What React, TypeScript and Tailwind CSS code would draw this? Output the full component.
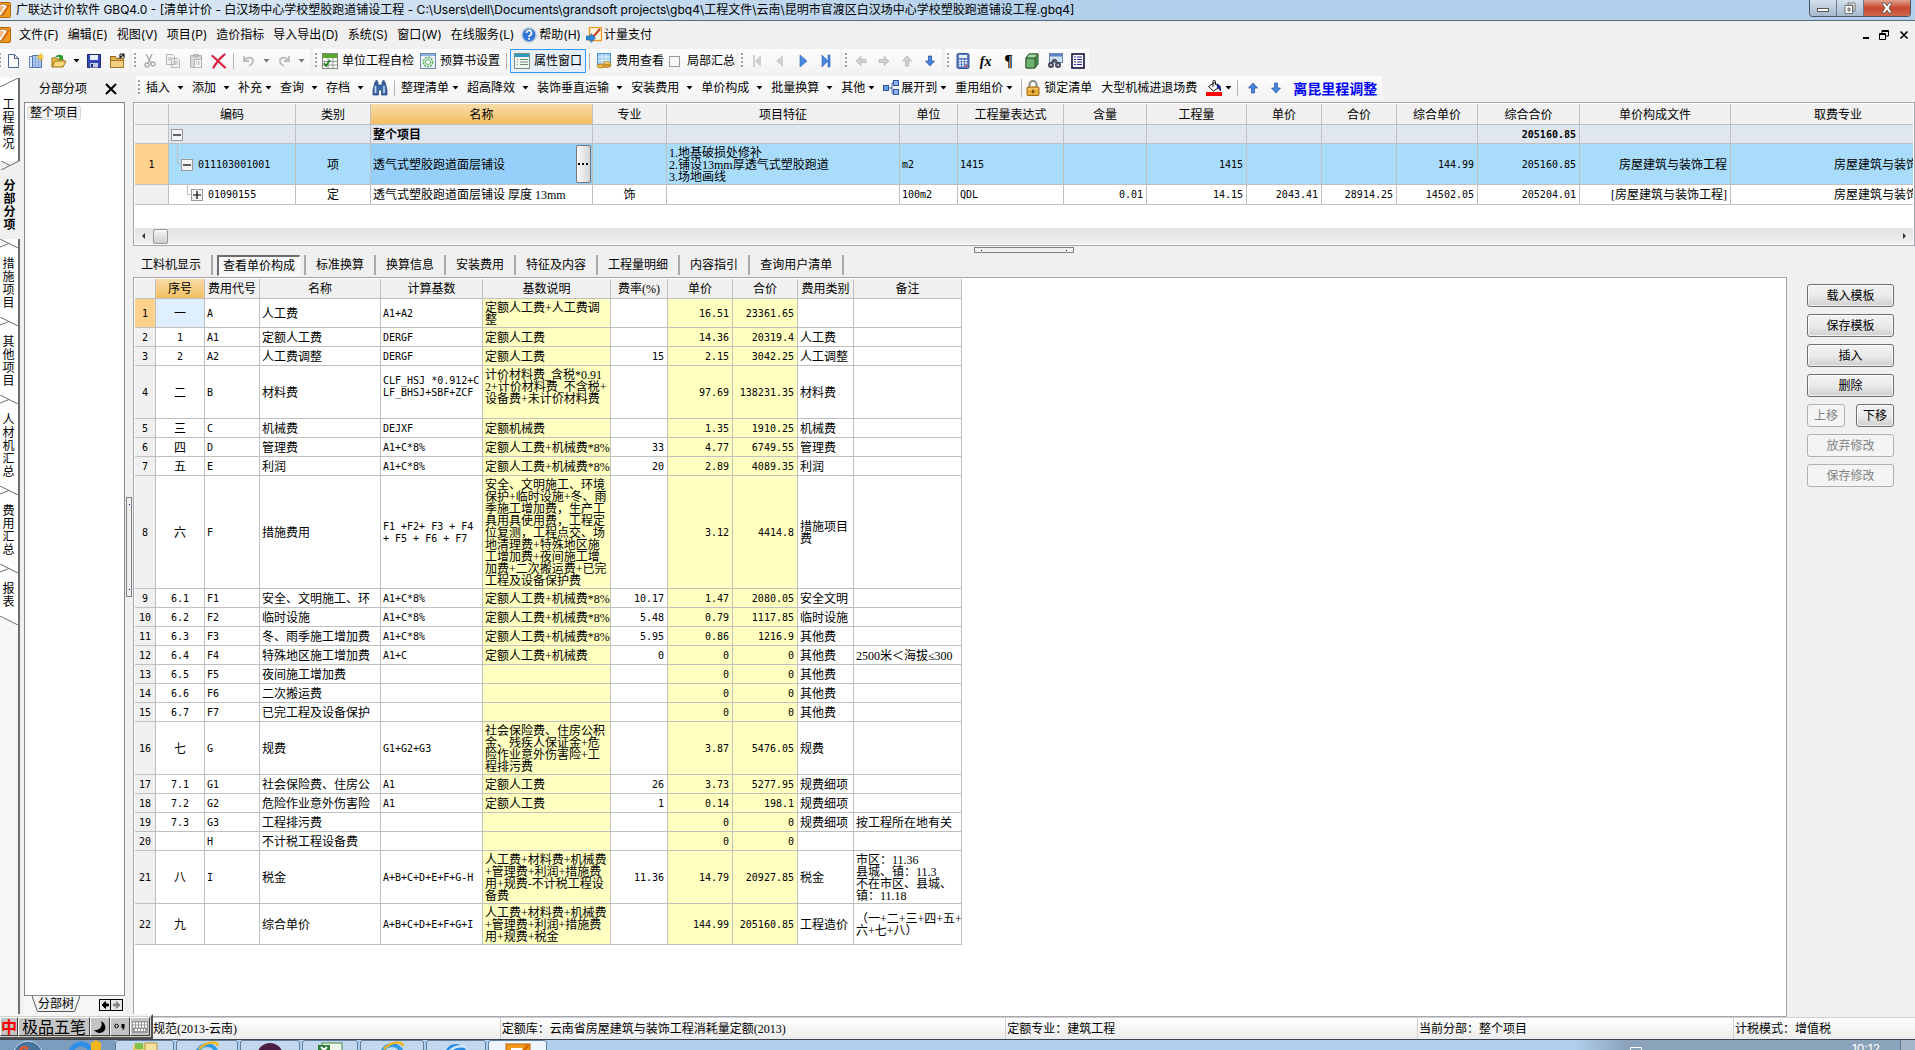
import React from 'react';
import clsx from 'clsx';

type Align = 'left' | 'center' | 'right';

/* ---------- icons ---------- */

const paths: Record<string, React.ReactNode> = {
  logo: (
    <>
      <rect x="0.5" y="0.5" width="15" height="15" rx="1" fill="#f39a1d" stroke="#b5650a" />
      <path d="M2 4l6-2 5 2-4 9-6 1z" fill="#fff" stroke="#8a5a20" strokeWidth="0.7" />
      <path d="M4 5h5M4 7h4M4 9h3" stroke="#e07a10" />
      <path d="M14 3L7 13" stroke="#d86a00" strokeWidth="2" />
    </>
  ),
  help: (
    <>
      <circle cx="8" cy="8" r="7" fill="#2f74d8" stroke="#b8c4d4" strokeWidth="1.5" />
      <path d="M5.5 6a2.5 2.5 0 1 1 3.6 2.2C8.2 8.7 8 9 8 10" fill="none" stroke="#fff" strokeWidth="1.7" />
      <rect x="7.2" y="11" width="1.7" height="1.7" fill="#fff" />
    </>
  ),
  pay: (
    <>
      <rect x="3.5" y="0.5" width="12" height="13" fill="#fff7e0" stroke="#e89a20" strokeWidth="1.4" />
      <path d="M14 2L7 10l-2-2" fill="none" stroke="#c8401a" strokeWidth="2" />
      <path d="M0 9h5V6.5l4.5 4.5L5 15.5V13H0z" fill="#2b8bd8" stroke="#125a9a" strokeWidth="0.6" />
    </>
  ),
  page: <path d="M3.5 1.5h6l4 4v9h-10z M9.5 1.5v4h4" fill="#fff" stroke="#46648c" />,
  sheets: (
    <>
      <path d="M1.5 3.5h9v11h-9z" fill="#dce9fa" stroke="#5d82b5" />
      <path d="M4.5 2.5h9v12h-9z" fill="#b5d0f2" stroke="#4d77b0" />
      <path d="M7.5 3v11M10.5 3v11M5 6h8M5 9h8M5 12h8" stroke="#7ba0d0" strokeWidth="0.7" />
      <path d="M12.5 0v8M8.5 4h8M10 1.5l5 5M15 1.5l-5 5" stroke="#f4c53a" strokeWidth="1.1" />
    </>
  ),
  open: (
    <>
      <path d="M1 14V5h4l1 1h6v2" fill="#f0c24c" stroke="#9a6e12" />
      <path d="M1 14l3-6h11l-3 6z" fill="#fbdc7c" stroke="#9a6e12" />
      <path d="M4 5c1-4 6-4 7-2l1-1v5H7l2-1.6C8 3.5 6 3.5 4 5z" fill="#2e9a2e" />
    </>
  ),
  save: (
    <>
      <path d="M1.5 1.5h13v13h-13z" fill="#3449b4" stroke="#1d2a7a" />
      <rect x="4" y="2" width="8" height="5" fill="#e8ecfa" />
      <rect x="4" y="10" width="8" height="4.5" fill="#c8cde6" />
      <rect x="5" y="11" width="2" height="3" fill="#1d2a7a" />
    </>
  ),
  folder: (
    <>
      <path d="M1.5 14.5v-11h5l1 2h7v9z" fill="#e6b04a" stroke="#8e6420" />
      <path d="M1.5 7.5h13v7h-13z" fill="#f5d083" stroke="#a37728" />
      <path d="M11 5V1m0 0h4v4m0-4l-4 4" fill="none" stroke="#222" strokeWidth="1.2" />
    </>
  ),
  cut: (
    <g fill="none" stroke="#a8a8a8" strokeWidth="1.3">
      <path d="M4 1l5 9M10 1L6 10" />
      <circle cx="5" cy="12" r="2" />
      <circle cx="11" cy="11" r="2" />
    </g>
  ),
  copy: <path d="M1.5 1.5h6l2 2v8h-8zM6.5 5.5h6l2 2v7h-8zM8 9h5M8 11h5M3 5h3M3 7h3" fill="#f4f4f4" stroke="#b4b4b4" />,
  paste: (
    <>
      <path d="M2.5 2.5h11v12h-11z" fill="#d8d8d8" stroke="#b0b0b0" />
      <rect x="5" y="1" width="6" height="3" fill="#b8b8b8" />
      <path d="M6.5 6.5h7v8h-7zM8 9h4M8 11h4" fill="#f6f6f6" stroke="#b4b4b4" />
    </>
  ),
  del: <path d="M1.5 3C5 6 9 10 14 14.5M13.5 1.5C9 5 5 10 2.5 14.5" fill="none" stroke="#d81e3a" strokeWidth="2.2" strokeLinecap="round" />,
  undo: <path d="M3 3v5h5M3 8c3-5 9-4 9 0 0 3-2 4-4 5" fill="none" stroke="#bcbcbc" strokeWidth="1.8" />,
  redo: <path d="M13 3v5H8M13 8c-3-5-9-4-9 0 0 3 2 4 4 5" fill="none" stroke="#bcbcbc" strokeWidth="1.8" />,
  check: (
    <>
      <rect x="0.5" y="0.5" width="15" height="15" fill="#fff" stroke="#7d8a7d" />
      <rect x="1" y="1" width="14" height="4" fill="#5aa82a" />
      <path d="M1 8.5h14M1 12h14M6 5v10M11 5v10" stroke="#8a978a" />
      <path d="M2 10l2 3 4-6" fill="none" stroke="#1c7a1c" strokeWidth="1.6" />
    </>
  ),
  gear: (
    <>
      <rect x="0.5" y="0.5" width="15" height="15" fill="#eaf1f8" stroke="#6e8cab" />
      <rect x="1" y="1" width="14" height="2" fill="#8fb4da" />
      <circle cx="8" cy="9" r="4.6" fill="none" stroke="#62b562" strokeWidth="1.6" strokeDasharray="2 1" />
      <circle cx="8" cy="9" r="2.5" fill="#fff" stroke="#62b562" />
    </>
  ),
  props: (
    <>
      <rect x="0.5" y="0.5" width="15" height="15" fill="#f4f6f4" stroke="#78917f" />
      <rect x="1" y="1" width="14" height="3" fill="#2a9ac4" />
      <path d="M3 6.5h1M3 9h1M3 11.5h1M6 6.5h8M6 9h8M6 11.5h8" stroke="#6b8a75" />
    </>
  ),
  fee: (
    <>
      <rect x="1.5" y="0.5" width="13" height="11" fill="#9fd0f0" stroke="#4c96c8" />
      <path d="M2 4h12M2 7.5h12M6 1v10M10 1v10" stroke="#e6f4fc" />
      <ellipse cx="5" cy="13" rx="4" ry="2" fill="#e7b84c" stroke="#a8761a" strokeWidth="0.7" />
      <ellipse cx="11" cy="12" rx="4" ry="2.5" fill="#d99b30" stroke="#a8761a" strokeWidth="0.7" />
      <ellipse cx="11" cy="10" rx="3.5" ry="1.5" fill="#f5d47c" stroke="#a8761a" strokeWidth="0.7" />
    </>
  ),
  first: <path d="M4 2v12h2V8l6 6V2L6 8V2z" fill="#cfcfcf" />,
  prev: <path d="M11 2v12L4 8z" fill="#cfcfcf" />,
  next: <path d="M5 2v12l7-6z" fill="#4a86e0" stroke="#2c62ba" strokeWidth="0.6" />,
  last: <path d="M12 2v12h-2V8l-6 6V2l6 6V2z" fill="#4a86e0" stroke="#2c62ba" strokeWidth="0.6" />,
  aleft: <path d="M3 8l5-4.5v3h5v3H8v3z" fill="#d0d0d0" stroke="#b0b0b0" strokeWidth="0.7" />,
  aright: <path d="M13 8L8 3.5v3H3v3h5v3z" fill="#d0d0d0" stroke="#b0b0b0" strokeWidth="0.7" />,
  aupOff: <path d="M8 3l4.5 5h-3v5h-3V8h-3z" fill="#d0d0d0" stroke="#b0b0b0" strokeWidth="0.7" />,
  aup: <path d="M8 3l4.5 5h-3v5h-3V8h-3z" fill="#4a86e0" stroke="#1f4fa0" strokeWidth="0.7" />,
  adown: <path d="M8 13l4.5-5h-3V3h-3v5h-3z" fill="#4a86e0" stroke="#1f4fa0" strokeWidth="0.7" />,
  calc: (
    <>
      <rect x="2" y="0.5" width="12" height="15" rx="1.5" fill="#5c7fc4" stroke="#33508c" />
      <rect x="4" y="2" width="8" height="3" fill="#e4eef8" />
      <path d="M4 7.5h8M4 10h8M4 12.5h8" stroke="#fff" strokeWidth="1.5" strokeDasharray="2 1" />
      <rect x="10" y="12" width="2" height="2" fill="#e04a3a" />
    </>
  ),
  cube: (
    <>
      <path d="M2 5l3-4h9v10l-3 4H2z" fill="#4a8f4a" stroke="#2c5a2c" />
      <path d="M2 5h9v10H2z" fill="#6fb26f" stroke="#2c5a2c" />
      <path d="M2 5l3-4h9l-3 4z" fill="#a8d6a8" stroke="#2c5a2c" />
    </>
  ),
  find: (
    <>
      <rect x="2.5" y="0.5" width="13" height="9" fill="#cfe0f4" stroke="#6a87b2" />
      <rect x="3" y="1" width="12" height="2.5" fill="#5b85c8" />
      <circle cx="4" cy="12" r="3" fill="#445" />
      <circle cx="11" cy="12" r="3" fill="#445" />
      <path d="M4 9l2-3h3l2 3" fill="#556" />
      <circle cx="4" cy="12" r="1.3" fill="#aac" />
      <circle cx="11" cy="12" r="1.3" fill="#aac" />
    </>
  ),
  list: (
    <>
      <rect x="2" y="1" width="12" height="14" fill="#fff" stroke="#101040" strokeWidth="1.6" />
      <path d="M4 4h2M4 6.5h2M4 9h2M4 11.5h2M7 4h5M7 6.5h5M7 9h5M7 11.5h5" stroke="#23238c" />
    </>
  ),
  binoc: (
    <>
      <path d="M3 2h3v3h4V2h3l2 8v5H9.5v-5h-3v5H1v-5z" fill="#3c68a8" stroke="#1d3c70" strokeWidth="0.7" />
      <path d="M3.5 6v7M12 6v7" stroke="#c4d8f0" strokeWidth="1.6" />
      <path d="M3.5 1h2M10.5 1h2" stroke="#1d3c70" strokeWidth="1.5" />
    </>
  ),
  tree: (
    <>
      <path d="M6 8h3M9 3v10M9 3h2M9 13h2" fill="none" stroke="#3a5ea8" />
      <rect x="0.5" y="5.5" width="5" height="5" fill="#6f9be0" stroke="#2c55a4" />
      <rect x="10.5" y="0.5" width="5" height="5" fill="#8fb2ea" stroke="#2c55a4" />
      <rect x="10.5" y="9.5" width="5" height="5" fill="#8fb2ea" stroke="#2c55a4" />
    </>
  ),
  lock: (
    <>
      <path d="M4.5 8V4.5a3.5 3.5 0 0 1 7 0V8" fill="none" stroke="#8c8c8c" strokeWidth="2" />
      <rect x="2" y="7" width="12" height="8.5" rx="1" fill="#e8ab34" stroke="#9a6a10" />
      <path d="M3 9h10" stroke="#fadc8c" />
      <path d="M8 9.5v4M6.5 11.5h3" stroke="#5e3d00" strokeWidth="1.2" />
    </>
  ),
  bucket: (
    <>
      <path d="M2.5 6.5l6-4 5 4.5-6 4z" fill="#fff" stroke="#111" />
      <path d="M7 7V1.5a1.2 1.2 0 0 1 2.4 0V5" fill="none" stroke="#111" />
      <path d="M11 4c3 1 4 3 3.5 7-1-2-2-3-3-3z" fill="#1a2a90" stroke="#1a2a90" />
      <rect x="0" y="12" width="16" height="4" fill="#f00" />
    </>
  ),
};

function Icon({ name, className }: { name: string; className?: string }) {
  return (
    <svg viewBox="0 0 16 16" className={clsx('block h-4 w-4 shrink-0', className)} aria-hidden="true">
      {paths[name]}
    </svg>
  );
}

function Caret({ className }: { className?: string }) {
  return (
    <svg viewBox="0 0 7 4" className={clsx('block h-1 w-[7px]', className)} aria-hidden="true">
      <path d="M0.5 0h6L3.5 3.5z" fill="currentColor" />
    </svg>
  );
}

function Grip() {
  return <span className="mx-[2px] h-4 w-[2px] bg-[repeating-linear-gradient(#a0a0a0_0_2px,transparent_2px_4px)]" />;
}

function Sep() {
  return <span className="mx-[3px] h-4 w-px shrink-0 bg-[#b4b4b4]" />;
}

function Tool({ icon, label }: { icon: string; label: string }) {
  return (
    <button aria-label={label} className="flex h-[22px] w-[23px] items-center justify-center">
      <Icon name={icon} />
    </button>
  );
}

function DropCaret({ off }: { off?: boolean }) {
  return (
    <button aria-label="更多" className={clsx('flex h-[22px] w-3 items-center justify-center', off ? 'text-[#777]' : 'text-black')}>
      <Caret />
    </button>
  );
}

const strip = 'flex h-6 items-center bg-linear-to-b from-[#fdfdfd] to-[#f3f3f3]';

/* ---------- top of the window ---------- */

function TitleBar() {
  return (
    <header className="flex h-[21px] shrink-0 items-start overflow-hidden border-b border-[#5d6b78] bg-linear-to-r from-[#dfeaf5] via-[#b1cfeb] via-60% to-[#b1cfeb]">
      <Icon name="logo" className="mt-[2px] -ml-[5px]" />
      <h1 className="ml-[5px] text-[12px] leading-[19px] whitespace-nowrap">
        广联达计价软件 GBQ4.0 - [清单计价 - 白汉场中心学校塑胶跑道铺设工程 - C:\Users\dell\Documents\grandsoft projects\gbq4\工程文件\云南\昆明市官渡区白汉场中心学校塑胶跑道铺设工程.gbq4]
      </h1>
      <div className="mr-1 ml-auto flex h-[17px] overflow-hidden rounded-b-[4px] border border-t-0 border-[#4a5868]">
        <button aria-label="最小化" className="flex w-[27px] items-center justify-center border-r border-[#6b7a8a] bg-linear-to-b from-[#d5e0ec] to-[#a5b8cc]">
          <span className="mt-1 h-1 w-3 border border-[#555] bg-white" />
        </button>
        <button aria-label="还原" className="flex w-[27px] items-center justify-center border-r border-[#6b7a8a] bg-linear-to-b from-[#d5e0ec] to-[#a5b8cc]">
          <svg viewBox="0 0 12 12" className="h-3 w-3">
            <path d="M4 1h7v8H9V3H4zM1 3.5h7.5v8H1zM4 6v3h2V6z" fill="#fff" fillRule="evenodd" stroke="#555" strokeWidth="0.8" />
          </svg>
        </button>
        <button aria-label="关闭" className="flex w-[46px] items-center justify-center bg-linear-to-b from-[#e2a090] via-[#c8462c] to-[#d0684c]">
          <svg viewBox="0 0 12 12" className="h-3 w-3">
            <path d="M1 1h3l2 3 2-3h3L8 6l3 5H8L6 8l-2 3H1l3-5z" fill="#fff" stroke="#555" strokeWidth="0.8" />
          </svg>
        </button>
      </div>
    </header>
  );
}

const menus = ['文件(F)', '编辑(E)', '视图(V)', '项目(P)', '造价指标', '导入导出(D)', '系统(S)', '窗口(W)', '在线服务(L)'];

function MenuBar() {
  return (
    <nav className="flex h-7 shrink-0 items-center overflow-hidden text-[12px] whitespace-nowrap">
      <Icon name="logo" className="-ml-[5px]" />
      <div className="flex gap-[9px] pl-2">
        {menus.map((m) => (
          <button key={m}>{m}</button>
        ))}
      </div>
      <button className="flex items-center gap-[2px] pl-[7px]">
        <Icon name="help" /> 帮助(H)
      </button>
      <button className="ml-[5px] flex items-center gap-[2px]">
        <Icon name="pay" /> 计量支付
      </button>
      <div className="mr-[6px] ml-auto flex items-center gap-[10px]">
        <button aria-label="最小化子窗口" className="flex h-3 w-[6px] items-end pb-[2px]">
          <span className="h-[2px] w-[6px] bg-black" />
        </button>
        <button aria-label="还原子窗口">
          <svg viewBox="0 0 10 10" className="block h-[10px] w-[10px]">
            <path d="M3 3V.5h6.5V6H7M3 1.5h6M.5 3.5h6v6h-6zM.5 4.5h6" fill="none" stroke="#000" />
          </svg>
        </button>
        <button aria-label="关闭子窗口">
          <svg viewBox="0 0 10 10" className="block h-[10px] w-[10px]">
            <path d="M1.5 1.5l7 7M8.5 1.5l-7 7" stroke="#000" strokeWidth="1.6" />
          </svg>
        </button>
      </div>
    </nav>
  );
}

function MainToolbar() {
  return (
    <div className="flex h-[27px] shrink-0 items-start gap-[3px] overflow-hidden text-[12px] whitespace-nowrap">
      <div className={clsx(strip, 'pr-px')}>
        <span className="h-4 w-px bg-[repeating-linear-gradient(#a0a0a0_0_2px,transparent_2px_4px)]" />
        <Tool icon="page" label="新建" />
        <Tool icon="sheets" label="新建工程" />
        <Tool icon="open" label="打开" />
        <DropCaret />
        <Tool icon="save" label="保存" />
        <Tool icon="folder" label="另存" />
      </div>
      <div className={clsx(strip, 'pr-[3px]')}>
        <Grip />
        <Tool icon="cut" label="剪切" />
        <Tool icon="copy" label="复制" />
        <Tool icon="paste" label="粘贴" />
        <Tool icon="del" label="删除" />
        <Sep />
        <Tool icon="undo" label="撤消" />
        <DropCaret off />
        <Tool icon="redo" label="恢复" />
        <DropCaret off />
      </div>
      <div className={clsx(strip, 'pr-px')}>
        <Grip />
        <button className="flex items-center gap-1 px-[3px]"><Icon name="check" />单位工程自检</button>
        <button className="flex items-center gap-1 px-[3px]"><Icon name="gear" />预算书设置</button>
        <Sep />
        <button className="flex h-6 items-center gap-1 border border-[#3399ff] bg-[#e5effa] px-[3px]"><Icon name="props" />属性窗口</button>
        <Sep />
        <button className="flex items-center gap-1 pl-[3px]"><Icon name="fee" />费用查看</button>
        <label className="flex items-center gap-[7px] pl-[5px]">
          <input type="checkbox" className="h-[11px] w-[11px] appearance-none border border-[#9a9a9a] bg-[#f8f8f8]" />
          局部汇总
        </label>
      </div>
      <div className={clsx(strip, 'pr-[3px]')}>
        <Grip />
        <Tool icon="first" label="首行" />
        <Tool icon="prev" label="上一行" />
        <Tool icon="next" label="下一行" />
        <Tool icon="last" label="末行" />
      </div>
      <div className={clsx(strip, 'pr-px')}>
        <Grip />
        <Tool icon="aleft" label="升级" />
        <Tool icon="aright" label="降级" />
        <Tool icon="aupOff" label="上移" />
        <Tool icon="adown" label="下移" />
      </div>
      <div className={strip}>
        <Grip />
        <Tool icon="calc" label="计算器" />
        <button className="w-[23px] text-center text-[14px] font-bold italic [font-family:'Liberation_Serif',serif]">fx</button>
        <button className="w-[23px] text-center text-[16px] font-bold [font-family:'Liberation_Serif',serif]">¶</button>
        <Tool icon="cube" label="图元" />
        <Tool icon="find" label="查找" />
        <Tool icon="list" label="列表" />
      </div>
    </div>
  );
}

function DropText({ text, tight }: { text: string; tight?: boolean }) {
  return (
    <button className="flex items-center">
      {text}
      <span className={clsx('flex', tight ? 'w-[18px] pl-[3px]' : 'w-[22px] pl-[7px]')}>
        <Caret />
      </span>
    </button>
  );
}

function GridToolbar() {
  return (
    <div className="flex h-[26px] shrink-0 items-start overflow-hidden pl-[3px] text-[12px] whitespace-nowrap">
      <div className={clsx(strip, 'pr-[5px]')}>
        <Grip />
        <span className="w-1" />
        <DropText text="插入" />
        <DropText text="添加" />
        <DropText text="补充" tight />
        <DropText text="查询" />
        <DropText text="存档" />
        <button aria-label="查找" className="mr-[3px]"><Icon name="binoc" /></button>
        <Sep />
        <span className="w-[3px]" />
        <DropText text="整理清单" tight />
        <DropText text="超高降效" />
        <DropText text="装饰垂直运输" />
        <DropText text="安装费用" />
        <DropText text="单价构成" />
        <DropText text="批量换算" />
        <DropText text="其他" tight />
        <Icon name="tree" className="mr-[2px]" />
        <DropText text="展开到" tight />
        <DropText text="重用组价" tight />
        <button className="flex items-center gap-[3px] border-l border-[#b4b4b4] pl-[3px]"><Icon name="lock" />锁定清单</button>
        <button className="px-[9px]">大型机械进退场费</button>
        <Icon name="bucket" />
        <DropCaret />
        <Sep />
        <Tool icon="aup" label="上移" />
        <Tool icon="adown" label="下移" />
        <button className="pl-[6px] text-[14px] font-bold text-[#0000f0]">离昆里程调整</button>
      </div>
    </div>
  );
}

/* ---------- left side ---------- */

const sideTabs = [
  { text: '工程概况', box: 'h-[83px]' },
  { text: '分部分项', box: 'h-[78px]' },
  { text: '措施项目', box: 'h-[78px]' },
  { text: '其他项目', box: 'h-[78px]' },
  { text: '人材机汇总', box: 'h-[91px]' },
  { text: '费用汇总', box: 'h-[78px]' },
  { text: '报表', box: 'h-[52px]' },
];

function SideTabs() {
  return (
    <nav className="flex w-5 shrink-0 flex-col bg-[#f6f6f6] pt-[2px]">
      {sideTabs.map((t, i) => (
        <button
          key={t.text}
          className={clsx(
            'flex flex-col items-center pr-px text-[12px] leading-[13px]',
            t.box,
            i === 1 ? 'bg-[#f0f0f0] font-bold' : 'border-r-2 border-[#6d6d6d] bg-white',
          )}
        >
          <svg viewBox="0 0 18 9" className="h-[9px] w-[18px] shrink-0" aria-hidden="true">
            {i > 1 && <path d="M0 0L18 9M0 8L9 4.5" stroke="#6d6d6d" fill="none" />}
            {i === 1 && <path d="M0 9L18 0M0 0L9 4.5" stroke="#6d6d6d" fill="none" />}
            {i === 0 && <path d="M0 9L18 0" stroke="#6d6d6d" fill="none" />}
          </svg>
          <span className="my-auto w-3">{t.text}</span>
        </button>
      ))}
      <div className="flex-1 border-r-2 border-[#6d6d6d]">
        <svg viewBox="0 0 18 9" className="h-[9px] w-[18px]" aria-hidden="true">
          <path d="M0 0h18v9z" fill="#fff" />
          <path d="M0 0L18 9" stroke="#6d6d6d" />
        </svg>
      </div>
    </nav>
  );
}

function TreePane() {
  return (
    <aside className="flex w-[105px] shrink-0 flex-col pl-1 text-[12px]">
      <div className="flex h-[26px] items-center justify-between pr-[8px] pl-[15px]">
        分部分项
        <button aria-label="关闭">
          <svg viewBox="0 0 12 12" className="block h-3 w-3">
            <path d="M1 1l10 10M11 1L1 11" stroke="#000" strokeWidth="2" />
          </svg>
        </button>
      </div>
      <div className="flex-1 border border-[#828790] bg-white p-px">
        <button className="ml-px rounded-[2px] border border-[#d9d9d9] bg-[#f2f2f2] px-[2px] leading-[12px]">整个项目</button>
      </div>
      <div className="flex h-[21px] items-start justify-between bg-[#f6f6f6] pl-2">
        <div className="flex">
          <svg viewBox="0 0 6 16" className="h-4 w-[6px]"><path d="M0 0l5.5 15.5" stroke="#555" /></svg>
          <button className="border-b border-[#555] bg-[#f0f0f0] leading-[15px]">分部树</button>
          <svg viewBox="0 0 6 16" className="h-4 w-[6px]"><path d="M6 0L.5 15.5" stroke="#555" /></svg>
        </div>
        <div className="mt-[3px] mr-[2px] flex">
          <button aria-label="向左" className="flex h-3 w-3 items-center justify-center border border-black bg-[#e8e8e8]">
            <svg viewBox="0 0 8 8" className="h-2 w-2"><path d="M1 4l3.5-3.5v2.5h3v2h-3v2.5z" stroke="#000" /></svg>
          </button>
          <button aria-label="向右" className="flex h-3 w-3 items-center justify-center border border-l-0 border-black bg-[#e8e8e8]">
            <svg viewBox="0 0 8 8" className="h-2 w-2"><path d="M7 4L3.5 .5v2.5h-3v2h3v2.5z" fill="#888" stroke="#888" /></svg>
          </button>
        </div>
      </div>
    </aside>
  );
}

/* ---------- upper grid ---------- */

const mono = "text-[10px] [font-family:'DejaVu_Sans_Mono','Noto_Sans_CJK_SC',monospace]";
const song = "text-[12px] [font-family:'Liberation_Serif','Noto_Sans_CJK_SC',sans-serif]";
const line = 'border-r border-b border-[#c0c0c0]';
const hot = 'bg-linear-to-b from-[#f9dba6] to-[#f2bf60]';

const alignOf: Record<Align, string> = {
  left: 'text-left pl-[2px]',
  center: 'text-center',
  right: 'text-right pr-[3px]',
};

const itemCols: { head: string; col: string; align: Align; num?: boolean }[] = [
  { head: '类别', col: 'w-[75px]', align: 'center' },
  { head: '名称', col: 'w-[222px]', align: 'left' },
  { head: '专业', col: 'w-[74px]', align: 'center' },
  { head: '项目特征', col: 'w-[233px]', align: 'left' },
  { head: '单位', col: 'w-[58px]', align: 'left', num: true },
  { head: '工程量表达式', col: 'w-[106px]', align: 'left', num: true },
  { head: '含量', col: 'w-[83px]', align: 'right', num: true },
  { head: '工程量', col: 'w-[100px]', align: 'right', num: true },
  { head: '单价', col: 'w-[75px]', align: 'right', num: true },
  { head: '合价', col: 'w-[75px]', align: 'right', num: true },
  { head: '综合单价', col: 'w-[81px]', align: 'right', num: true },
  { head: '综合合价', col: 'w-[102px]', align: 'right', num: true },
  { head: '单价构成文件', col: 'w-[151px]', align: 'right' },
  { head: '取费专业', col: 'w-[215px]', align: 'right' },
];

const items = [
  {
    no: '', code: '', open: true, indent: 'pl-[2px]', link: '', height: 'h-[19px]', tone: 'bg-[#dfe6f0] font-bold',
    cells: ['', '整个项目', '', '', '', '', '', '', '', '', '', '205160.85', '', ''],
  },
  {
    no: '1', code: '011103001001', open: true, indent: 'pl-3', link: 'left-2', height: 'h-[41px]', tone: 'bg-[#a9dcfb]',
    cells: ['项', '透气式塑胶跑道面层铺设', '', '1.地基破损处修补\n2.铺设13mm厚透气式塑胶跑道\n3.场地画线', 'm2', '1415', '', '1415', '', '', '144.99', '205160.85', '房屋建筑与装饰工程', '房屋建筑与装饰工程'],
  },
  {
    no: '', code: '01090155', open: false, indent: 'pl-[22px]', link: 'left-[18px]', height: 'h-5', tone: 'bg-white',
    cells: ['定', '透气式塑胶跑道面层铺设 厚度 13mm', '饰', '', '100m2', 'QDL', '0.01', '14.15', '2043.41', '28914.25', '14502.05', '205204.01', '[房屋建筑与装饰工程]', '房屋建筑与装饰工程'],
  },
];

function ItemGrid() {
  return (
    <section className="flex h-36 shrink-0 flex-col border border-[#a5a5ab] bg-white p-px">
      <div className="flex-1 overflow-hidden">
        <table className={clsx('w-[1811px] table-fixed border-separate border-spacing-0 leading-[12px]', song)}>
          <thead>
            <tr className="h-[21px] bg-[#f0f0f0]">
              <th aria-label="行号" className={clsx('w-[34px]', line)} />
              <th className={clsx('w-[127px] px-0 pt-px pb-0 font-normal', line)}>编码</th>
              {itemCols.map((c) => (
                <th key={c.head} className={clsx('px-0 pt-px pb-0 font-normal', line, c.col, c.head === '名称' && hot)}>{c.head}</th>
              ))}
            </tr>
          </thead>
          <tbody>
            {items.map((r, i) => (
              <tr key={i} className={clsx(r.height, r.tone)}>
                <td className={clsx('px-0 pt-px pb-0 text-center', mono, line, r.no ? 'bg-[#ffd18c]' : 'bg-[#f0f0f0]')}>{r.no}</td>
                <td className={clsx('relative pt-px pr-0 pb-0', line, r.indent)}>
                  {r.link && <span className={clsx('absolute top-0 h-1/2 w-1 border-b border-l border-[#c0c0c0]', r.link)} />}
                  <div className="flex items-center gap-[5px]">
                    <button aria-label="展开" className="h-3 w-3 border border-[#999] bg-[#f4f4f4] p-px">
                      <svg viewBox="0 0 8 8" className="block h-2 w-2">
                        <path d={r.open ? 'M0 4h8' : 'M0 4h8M4 0v8'} stroke="#000" strokeWidth="1.2" />
                      </svg>
                    </button>
                    <span className={mono}>{r.code}</span>
                  </div>
                </td>
                {itemCols.map((c, k) => (
                  <td
                    key={c.head}
                    className={clsx('relative pt-px pb-0 whitespace-pre', line, alignOf[c.align], c.num && mono, k === 1 && i === 1 && 'bg-[#96d0fa]')}
                  >
                    {r.cells[k]}
                    {k === 1 && i === 1 && (
                      <button aria-label="编辑名称" className="absolute top-px right-px bottom-px w-[15px] rounded-[2px] border border-[#777] bg-linear-to-r from-[#fafafa] to-[#d4d4d4] p-px">
                        <svg viewBox="0 0 11 3" className="block h-[3px] w-[11px]">
                          <path d="M0 0h2v2H0zM4 0h2v2H4zM8 0h2v2H8z" />
                        </svg>
                      </button>
                    )}
                  </td>
                ))}
              </tr>
            ))}
          </tbody>
        </table>
      </div>
      <div className="flex h-4 shrink-0 items-center justify-between bg-linear-to-b from-[#e3e3e3] to-[#f0f0f0] px-[6px]">
        <div className="flex items-center gap-2">
          <button aria-label="向左滚动"><svg viewBox="0 0 4 8" className="block h-2 w-1"><path d="M4 1v6L1 4z" fill="#333" /></svg></button>
          <span className="h-[15px] w-[15px] rounded-[2px] border border-[#979797] bg-linear-to-b from-[#f6f6f6] to-[#cfcfcf]" />
        </div>
        <button aria-label="向右滚动"><svg viewBox="0 0 4 8" className="block h-2 w-1"><path d="M0 1v6l3-3z" fill="#333" /></svg></button>
      </div>
    </section>
  );
}

const detailTabs = ['工料机显示', '查看单价构成', '标准换算', '换算信息', '安装费用', '特征及内容', '工程量明细', '内容指引', '查询用户清单'];

function DetailTabs() {
  return (
    <div className="relative flex h-[31px] shrink-0 items-start pt-[9px] text-[12px]">
      {/* splitter handle */}
      <span className="absolute top-px left-1/2 flex h-[6px] w-[100px] -translate-x-1/2 items-center justify-between border border-[#808080] bg-[#f0f0f0] px-[6px]">
        <i className="h-px w-px bg-[#000080]" />
        <i className="h-px w-px bg-[#000080]" />
      </span>
      {detailTabs.map((t, i) => (
        <div key={t} className={clsx('flex h-5 items-center border-r-2 border-[#a8a8a8]', i === 0 ? 'pr-[10px] pl-2' : i === 1 ? 'px-1' : 'px-[10px]')}>
          <button className={clsx('leading-[18px]', i === 1 && 'border border-t-2 border-l-2 border-t-[#6d6d6d] border-r-white border-b-white border-l-[#6d6d6d] bg-[#f8f8f8] px-1')}>
            {t}
          </button>
        </div>
      ))}
    </div>
  );
}

/* ---------- unit price table ---------- */

const feeCols: { head: string; col: string; align: Align; num?: boolean; fill?: boolean }[] = [
  { head: '序号', col: 'w-[49px]', align: 'center' },
  { head: '费用代号', col: 'w-[55px]', align: 'left', num: true },
  { head: '名称', col: 'w-[121px]', align: 'left' },
  { head: '计算基数', col: 'w-[102px]', align: 'left', num: true },
  { head: '基数说明', col: 'w-[128px]', align: 'left', fill: true },
  { head: '费率(%)', col: 'w-[57px]', align: 'right', num: true },
  { head: '单价', col: 'w-[65px]', align: 'right', num: true, fill: true },
  { head: '合价', col: 'w-[65px]', align: 'right', num: true, fill: true },
  { head: '费用类别', col: 'w-[56px]', align: 'left' },
  { head: '备注', col: 'w-[108px]', align: 'left' },
];

const fees = [
  ['一', 'A', '人工费', 'A1+A2', '定额人工费+人工费调\n整', '', '16.51', '23361.65', '', ''],
  ['1', 'A1', '定额人工费', 'DERGF', '定额人工费', '', '14.36', '20319.4', '人工费', ''],
  ['2', 'A2', '人工费调整', 'DERGF', '定额人工费', '15', '2.15', '3042.25', '人工调整', ''],
  ['二', 'B', '材料费', 'CLF_HSJ *0.912+C\nLF_BHSJ+SBF+ZCF\n ', '计价材料费_含税*0.91\n2+计价材料费_不含税+\n设备费+未计价材料费\n ', '', '97.69', '138231.35', '材料费', ''],
  ['三', 'C', '机械费', 'DEJXF', '定额机械费', '', '1.35', '1910.25', '机械费', ''],
  ['四', 'D', '管理费', 'A1+C*8%', '定额人工费+机械费*8%', '33', '4.77', '6749.55', '管理费', ''],
  ['五', 'E', '利润', 'A1+C*8%', '定额人工费+机械费*8%', '20', '2.89', '4089.35', '利润', ''],
  ['六', 'F', '措施费用', 'F1 +F2+ F3 + F4\n+ F5 + F6 + F7', '安全、文明施工、环境\n保护+临时设施+冬、雨\n季施工增加费，生产工\n具用具使用费，工程定\n位复测，工程点交、场\n地清理费+特殊地区施\n工增加费+夜间施工增\n加费+二次搬运费+已完\n工程及设备保护费', '', '3.12', '4414.8', '措施项目\n费', ''],
  ['6.1', 'F1', '安全、文明施工、环', 'A1+C*8%', '定额人工费+机械费*8%', '10.17', '1.47', '2080.05', '安全文明', ''],
  ['6.2', 'F2', '临时设施', 'A1+C*8%', '定额人工费+机械费*8%', '5.48', '0.79', '1117.85', '临时设施', ''],
  ['6.3', 'F3', '冬、雨季施工增加费', 'A1+C*8%', '定额人工费+机械费*8%', '5.95', '0.86', '1216.9', '其他费', ''],
  ['6.4', 'F4', '特殊地区施工增加费', 'A1+C', '定额人工费+机械费', '0', '0', '0', '其他费', '2500米＜海拔≤300'],
  ['6.5', 'F5', '夜间施工增加费', '', '', '', '0', '0', '其他费', ''],
  ['6.6', 'F6', '二次搬运费', '', '', '', '0', '0', '其他费', ''],
  ['6.7', 'F7', '已完工程及设备保护', '', '', '', '0', '0', '其他费', ''],
  ['七', 'G', '规费', 'G1+G2+G3', '社会保险费、住房公积\n金、残疾人保证金+危\n险作业意外伤害险+工\n程排污费', '', '3.87', '5476.05', '规费', ''],
  ['7.1', 'G1', '社会保险费、住房公', 'A1', '定额人工费', '26', '3.73', '5277.95', '规费细项', ''],
  ['7.2', 'G2', '危险作业意外伤害险', 'A1', '定额人工费', '1', '0.14', '198.1', '规费细项', ''],
  ['7.3', 'G3', '工程排污费', '', '', '', '0', '0', '规费细项', '按工程所在地有关'],
  ['', 'H', '不计税工程设备费', '', '', '', '0', '0', '', ''],
  ['八', 'I', '税金', 'A+B+C+D+E+F+G-H', '人工费+材料费+机械费\n+管理费+利润+措施费\n用+规费-不计税工程设\n备费', '11.36', '14.79', '20927.85', '税金', '市区：11.36\n县城、镇：11.3\n不在市区、县城、\n镇：11.18'],
  ['九', '', '综合单价', 'A+B+C+D+E+F+G+I', '人工费+材料费+机械费\n+管理费+利润+措施费\n用+规费+税金', '', '144.99', '205160.85', '工程造价', '（一+二+三+四+五+\n六+七+八）'],
];

const tallRows: Record<number, string> = { 0: 'h-[29px]', 3: 'h-[53px]', 7: 'h-[113px]', 15: 'h-[53px]', 20: 'h-[53px]', 21: 'h-[41px]' };

function FeeTable() {
  return (
    <table className={clsx('w-[827px] table-fixed border-separate border-spacing-0 leading-[12px]', song)}>
      <thead>
        <tr className="h-5 bg-[#f0f0f0]">
          <th aria-label="行号" className={clsx('w-[21px]', line)} />
          {feeCols.map((c, k) => (
            <th key={c.head} className={clsx('px-0 pt-px pb-0 font-normal whitespace-nowrap', line, c.col, k === 0 && hot)}>{c.head}</th>
          ))}
        </tr>
      </thead>
      <tbody>
        {fees.map((row, i) => (
          <tr key={i} className={tallRows[i] ?? 'h-[19px]'}>
            <td className={clsx('px-0 pt-px pb-0 text-center', mono, line, i === 0 ? 'bg-[#ffd18c]' : 'bg-[#f0f0f0]')}>{i + 1}</td>
            {feeCols.map((c, k) => {
              const digits = c.num || (k === 0 && /^[\d.]+$/.test(row[k]));
              return (
                <td
                  key={c.head}
                  className={clsx('overflow-hidden pt-px pb-0 whitespace-pre', line, alignOf[c.align], digits && mono, c.fill && 'bg-[#ffffc0]', i === 0 && k === 0 && 'bg-[#e0efff]')}
                >
                  {row[k]}
                </td>
              );
            })}
          </tr>
        ))}
      </tbody>
    </table>
  );
}

function SideButton({ text, off, small }: { text: string; off?: boolean; small?: boolean }) {
  return (
    <button
      disabled={off}
      className={clsx(
        'h-[23px] rounded-[3px] border text-[12px] leading-[12px]',
        small ? 'w-[38px]' : 'w-[87px]',
        off ? 'border-[#adb2b5] bg-[#f4f4f4] text-[#838383]' : 'border-[#707070] bg-linear-to-b from-[#f2f2f2] via-[#ebebeb] to-[#cfcfcf] inset-ring inset-ring-white/70',
      )}
    >
      {text}
    </button>
  );
}

/* ---------- bottom ---------- */

function StatusBar() {
  const cell = 'h-full border-t border-l border-[#d0d0d0] bg-linear-to-b from-white to-[#ececec] pl-px';
  return (
    <footer className={clsx('flex h-[22px] shrink-0 leading-[23px] whitespace-nowrap', song)}>
      <div className="h-full w-[26.1%] border-t border-[#d0d0d0] bg-linear-to-b from-white to-[#ececec] pl-[153px]">规范(2013-云南)</div>
      <div className={clsx(cell, 'w-[26.4%]')}>定额库：云南省房屋建筑与装饰工程消耗量定额(2013)</div>
      <div className={clsx(cell, 'w-[21.5%]')}>定额专业：建筑工程</div>
      <div className={clsx(cell, 'w-[16.5%]')}>当前分部：整个项目</div>
      <div className={clsx(cell, 'flex-1')}>计税模式：增值税</div>
    </footer>
  );
}

function ImeBar() {
  const key = 'flex h-full items-center justify-center border border-t-white border-l-white border-r-[#404040] border-b-[#404040] bg-[#c4c4c4]';
  return (
    <div className="absolute bottom-[11px] left-0 flex h-[25px] w-[153px] border-2 border-l-0 border-t-[#f4f4f4] border-r-[#505050] border-b-[#505050] bg-[#d4d0c8] p-px pl-0">
      <button className={clsx(key, 'w-[18px] text-[16px] font-bold text-[#f00]')}>中</button>
      <button className={clsx(key, 'w-[72px] text-[16px]')}>极品五笔</button>
      <button aria-label="半角" className={clsx(key, 'w-5')}>
        <svg viewBox="0 0 12 12" className="h-3 w-3"><path d="M7 0c6 3 6 11-1 12-3 0-5-2-6-3 6 1 9-4 7-9z" /></svg>
      </button>
      <button aria-label="标点" className={clsx(key, 'w-5')}>
        <svg viewBox="0 0 12 8" className="h-2 w-3">
          <circle cx="2.5" cy="3" r="1.8" fill="none" stroke="#000" />
          <path d="M7.5 1h3v3c0 2-1 3-2.5 3.5 1-1 1-2 1-2.5H7.5z" />
        </svg>
      </button>
      <button aria-label="软键盘" className={clsx(key, 'w-5')}>
        <svg viewBox="0 0 16 12" className="h-3 w-4">
          <rect width="16" height="12" fill="#999" />
          <path d="M1 2.5h14M1 5.5h14M3 9h10" stroke="#fff" strokeWidth="1.8" strokeDasharray="2 1" />
        </svg>
      </button>
    </div>
  );
}

const tasks = [
  { name: '文件夹', box: 'w-[59px]', art: <><rect x="2" y="4" width="20" height="12" fill="#e9cf7a" /><rect x="4" y="2" width="8" height="6" fill="#7fc24a" /><rect x="14" y="2" width="12" height="12" fill="#f4e2a0" stroke="#b8963c" /></> },
  { name: '浏览器', box: 'w-[62px]', art: <><circle cx="14" cy="14" r="10" fill="none" stroke="#2f9be6" strokeWidth="4" /><path d="M6 8c8-8 18-8 19-3" fill="none" stroke="#f0b61c" strokeWidth="2.5" /></> },
  { name: '下载', box: 'w-[60px]', art: <circle cx="14" cy="15" r="13" fill="#4b1f45" /> },
  { name: '表格', box: 'w-[56px]', art: <><rect x="6" y="2" width="20" height="12" fill="#eef6ea" stroke="#3a8a42" /><path d="M2 4h12v10H2z" fill="#2f7d3a" /><path d="M5 6l6 6M11 6l-6 6" stroke="#fff" strokeWidth="2" /></> },
  { name: '浏览器窗口', box: 'w-[64px]', art: <><circle cx="14" cy="14" r="10" fill="none" stroke="#2f9be6" strokeWidth="4" /><path d="M6 8c8-8 18-8 19-3" fill="none" stroke="#f0b61c" strokeWidth="2.5" /></> },
  { name: '网页', box: 'w-[60px]', art: <><circle cx="14" cy="14" r="11" fill="#2c8be0" /><path d="M6 12c4-6 12-8 18-6" fill="none" stroke="#cfe8fb" strokeWidth="2.5" /></> },
  { name: '计价软件', box: 'w-[59px]', art: <><rect x="2" y="3" width="24" height="14" fill="#f39a1d" stroke="#b5650a" /><path d="M7 7h12l-4 8H7z" fill="#fff" /><path d="M24 4l-8 11" stroke="#d86a00" strokeWidth="3" /></> },
];

function TaskBar() {
  return (
    <div className="flex h-[11px] shrink-0 overflow-hidden border-t border-[#3a4652] bg-[#b1cfeb]">
      <div className="flex w-[115px] items-start justify-around bg-[#7d9dbf]">
        <svg viewBox="0 0 32 10" className="h-[10px] w-8"><circle cx="16" cy="16" r="15" fill="#47739c" stroke="#c4d8ea" /><path d="M8 10c3-4 6-3 8-1" stroke="#e05a3a" strokeWidth="3" fill="none" /></svg>
        <svg viewBox="0 0 36 10" className="h-[10px] w-9"><circle cx="14" cy="14" r="10" fill="none" stroke="#2f8fe6" strokeWidth="5" /><path d="M24 3l5-3 5 3v8H24z" fill="#f0b61c" /></svg>
      </div>
      {tasks.map((t, i) => (
        <button
          key={t.name}
          aria-label={t.name}
          className={clsx('mr-[2px] flex h-5 items-start justify-center rounded-t-[3px] border border-[#5f7f9f]', t.box, i === 6 ? 'bg-[#eef5fc]' : 'bg-[#c3d8ec]')}
        >
          <svg viewBox="0 0 28 10" className="h-[10px] w-7">{t.art}</svg>
        </button>
      ))}
      <div className="ml-auto flex w-[340px] items-start justify-end bg-linear-to-r from-[#b1cfeb] to-[#8ba3bb] to-15%">
        <span className="mt-[7px] mr-[210px] h-2 w-3 border border-white" />
        <span className="mr-[20px] pt-[3px] text-[12px] leading-[12px] text-white">10:12</span>
        <span className="h-full w-[15px] border-l border-[#5f7488] bg-[#a3b5c7]" />
      </div>
    </div>
  );
}

export default function App() {
  return (
    <div className="relative flex h-screen flex-col overflow-hidden bg-[#f0f0f0] text-black [font-family:Inter,'Noto_Sans_CJK_SC',sans-serif]">
      <TitleBar />
      <MenuBar />
      <MainToolbar />
      <div className="flex min-h-0 flex-1">
        <SideTabs />
        <TreePane />
        <div className="flex w-2 shrink-0 items-center">
          <span className="ml-px flex h-[100px] w-[6px] flex-col items-center justify-between border border-[#808080] bg-[#f0f0f0] py-[6px]">
            <i className="h-px w-px bg-[#000080]" />
            <i className="h-px w-px bg-[#000080]" />
          </span>
        </div>
        <main className="flex min-w-0 flex-1 flex-col">
          <GridToolbar />
          <ItemGrid />
          <DetailTabs />
          <div className="flex min-h-0 flex-1">
            <section className="flex-1 overflow-hidden border border-[#a5a5ab] bg-white p-px">
              <FeeTable />
            </section>
            <div className="flex w-32 shrink-0 flex-col items-start gap-[7px] pt-[7px] pl-5">
              <SideButton text="载入模板" />
              <SideButton text="保存模板" />
              <SideButton text="插入" />
              <SideButton text="删除" />
              <div className="flex gap-[11px]">
                <SideButton text="上移" off small />
                <SideButton text="下移" small />
              </div>
              <SideButton text="放弃修改" off />
              <SideButton text="保存修改" off />
            </div>
          </div>
        </main>
      </div>
      <StatusBar />
      <TaskBar />
      <ImeBar />
    </div>
  );
}
